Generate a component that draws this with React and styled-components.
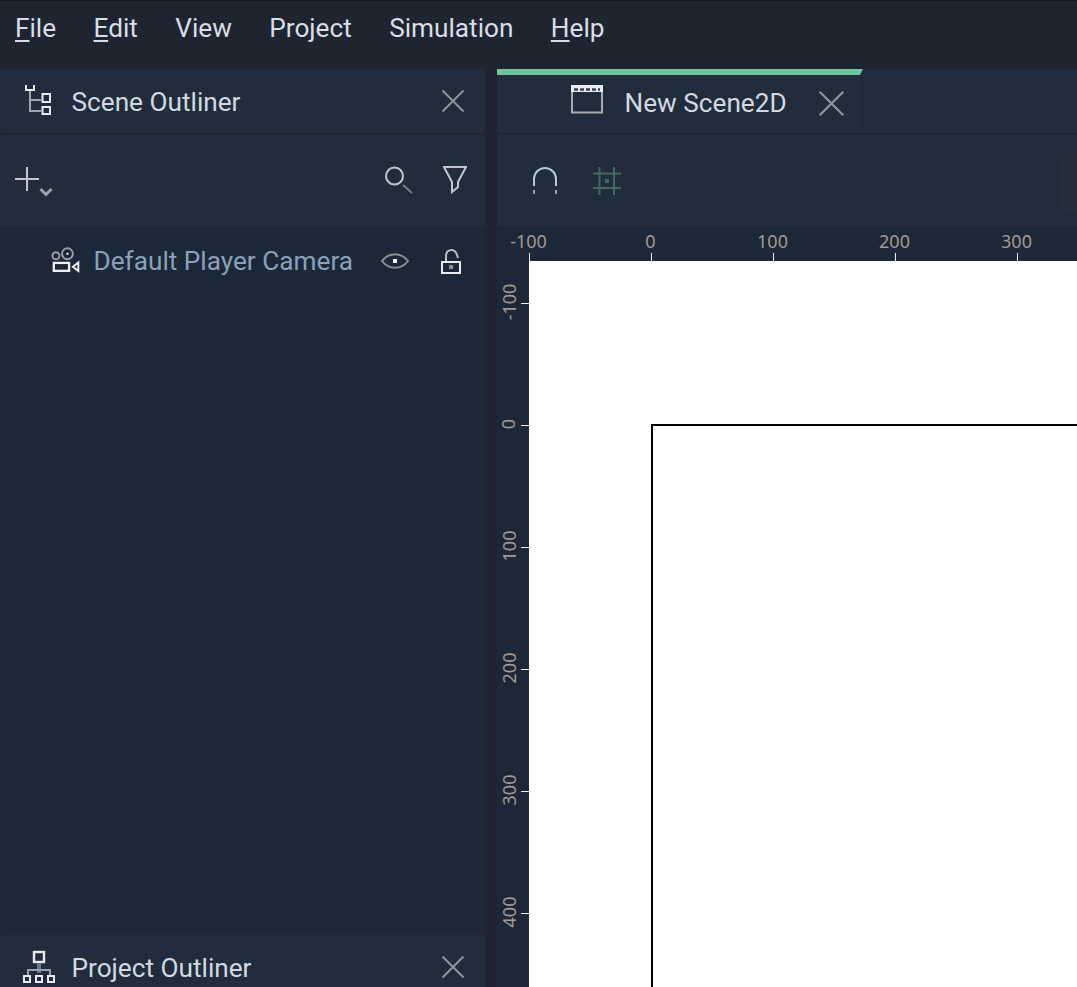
import React from "react";
import styled, { createGlobalStyle } from "styled-components";

const MENU = [
  { label: "File", key: "F" },
  { label: "Edit", key: "E" },
  { label: "View" },
  { label: "Project" },
  { label: "Simulation" },
  { label: "Help", key: "H" },
];

const RULER_VALUES = [-100, 0, 100, 200, 300, 400];
const PX_PER_UNIT = 1.22;

function TreeIcon() {
  return (
    <svg width="28" height="32" viewBox="0 0 28 32" fill="none">
      <path d="M2 0v5h8V0" stroke="#e8ebef" strokeWidth="2" />
      <path d="M6 6v20h11M6 15h11" stroke="#a0a5ab" strokeWidth="2" />
      <rect x="18.5" y="9" width="7.5" height="8" stroke="#e8ebef" strokeWidth="2" />
      <rect x="18.5" y="22" width="7.5" height="7" stroke="#e8ebef" strokeWidth="2" />
    </svg>
  );
}

function CloseIcon({ size = 24 }) {
  return (
    <svg width={size} height={size} viewBox="0 0 24 24" fill="none">
      <path d="M1.5 1.5l21 21M22.5 1.5l-21 21" stroke="#8f959b" strokeWidth="2" />
    </svg>
  );
}

function ClapIcon() {
  return (
    <svg width="32" height="36" viewBox="0 0 32 36" fill="none">
      <rect x="1" y="1" width="30" height="26.5" stroke="#a7abb0" strokeWidth="2" />
      <rect x="0" y="0" width="32" height="7" fill="#e8ebef" />
      <path d="M3 4.5h26" stroke="#39424f" strokeWidth="2.5" strokeDasharray="4 2" />
    </svg>
  );
}

function PlusIcon() {
  return (
    <svg width="40" height="32" viewBox="0 0 40 32" fill="none">
      <path d="M12 0v24M0 12h24" stroke="#c3c7cc" strokeWidth="2" />
      <path d="M25.5 22l5.5 5.5 5.5-5.5" stroke="#a0a5ab" strokeWidth="3" />
    </svg>
  );
}

function SearchIcon() {
  return (
    <svg width="28" height="28" viewBox="0 0 28 28" fill="none">
      <circle cx="9.5" cy="10" r="8.5" stroke="#c3c7cc" strokeWidth="2" />
      <path d="M18 19l9 8" stroke="#7c7f84" strokeWidth="2" />
    </svg>
  );
}

function FilterIcon() {
  return (
    <svg width="24" height="28" viewBox="0 0 24 28" fill="none">
      <path d="M1 1h22l-8 15v5l-6 5V16z" stroke="#c3c7cc" strokeWidth="2" />
    </svg>
  );
}

function MagnetIcon() {
  return (
    <svg width="26" height="30" viewBox="0 0 26 30" fill="none">
      <path d="M2 20V13a11 11 0 0 1 22 0v7" stroke="#b6c8d6" strokeWidth="2" />
      <path d="M2 24v4M24 24v4" stroke="#9aa4ae" strokeWidth="2" />
    </svg>
  );
}

function GridIcon() {
  return (
    <svg width="28" height="28" viewBox="0 0 28 28" fill="none">
      <path d="M6.5 0v28M21 0v28M0 6.5h28M0 21h28" stroke="#426a5e" strokeWidth="2" />
      <rect x="12" y="12" width="4" height="4" fill="#426a5e" />
    </svg>
  );
}

function CameraIcon() {
  return (
    <svg width="32" height="28" viewBox="0 0 32 28" fill="none">
      <circle cx="6.2" cy="8.5" r="3.7" stroke="#9b9fa5" strokeWidth="2" />
      <circle cx="18.3" cy="6.4" r="5.7" stroke="#9b9fa5" strokeWidth="2" />
      <rect x="17.3" y="5.4" width="2" height="2" fill="#fff" />
      <rect x="4" y="16" width="16" height="8.3" stroke="#eef0f2" strokeWidth="2.4" />
      <path d="M24 20l5.7-4.5v9z" stroke="#eef0f2" strokeWidth="2" />
    </svg>
  );
}

function EyeIcon() {
  return (
    <svg width="28" height="16" viewBox="0 0 28 16" fill="none">
      <path d="M1 8C8-1 20-1 27 8 20 17 8 17 1 8z" stroke="#8b9096" strokeWidth="2" />
      <rect x="12" y="6" width="4" height="4" fill="#fff" />
    </svg>
  );
}

function LockIcon() {
  return (
    <svg width="20" height="25" viewBox="0 0 20 25" fill="none">
      <rect x="1" y="13" width="18" height="11" stroke="#e8ebef" strokeWidth="2" />
      <path d="M5 12V7Q5 1 11 1 15 1 17 9" stroke="#b9bdc2" strokeWidth="2" />
      <rect x="8" y="16" width="4" height="4" fill="#8b8f94" />
    </svg>
  );
}

function HierarchyIcon() {
  return (
    <HierarchySvg width="34" height="40" viewBox="0 0 34 40" fill="none">
      <rect x="11" y="5" width="10" height="10" stroke="#e8ebef" strokeWidth="2.4" />
      <path d="M16 16v10" stroke="#6e7884" strokeWidth="4" />
      <path d="M5 28v-5h22v5" stroke="#9aa0a8" strokeWidth="2" />
      <rect x="1" y="29" width="6" height="6" stroke="#e8ebef" strokeWidth="2" />
      <rect x="13" y="29" width="6" height="6" stroke="#e8ebef" strokeWidth="2" />
      <rect x="25" y="29" width="6" height="6" stroke="#e8ebef" strokeWidth="2" />
    </HierarchySvg>
  );
}

export default function App() {
  return (
    <Page>
      <GlobalStyle />
      <MenuBar>
        {MENU.map((item) => (
          <MenuItem key={item.label}>
            {item.key ? <u>{item.key}</u> : null}
            {item.key ? item.label.slice(1) : item.label}
          </MenuItem>
        ))}
      </MenuBar>
      <Workspace>
        <LeftColumn>
          <PanelHeader>
            <HeaderIcon>
              <TreeIcon />
            </HeaderIcon>
            <PanelTitle>Scene Outliner</PanelTitle>
            <CloseIcon />
          </PanelHeader>
          <OutlinerToolbar>
            <PlusIcon />
            <ToolbarRight>
              <SearchIcon />
              <FilterIcon />
            </ToolbarRight>
          </OutlinerToolbar>
          <TreeArea>
            <TreeRow>
              <CameraIcon />
              <RowLabel>Default Player Camera</RowLabel>
              <RowActions>
                <EyeIcon />
                <LockIcon />
              </RowActions>
            </TreeRow>
          </TreeArea>
          <PanelHeader>
            <HeaderIcon>
              <HierarchyIcon />
            </HeaderIcon>
            <PanelTitle>Project Outliner</PanelTitle>
            <CloseIcon />
          </PanelHeader>
        </LeftColumn>
        <RightColumn>
          <TabBar>
            <Tab>
              <ClapIcon />
              <TabTitle>New Scene2D</TabTitle>
              <CloseIcon size={27} />
            </Tab>
          </TabBar>
          <SceneToolbar>
            <MagnetIcon />
            <GridIcon />
            <ToolbarStub />
          </SceneToolbar>
          <HorizontalRuler>
            {RULER_VALUES.slice(0, 5).map((v) => (
              <RulerMarkTop key={v} style={{ left: 153.5 + v * PX_PER_UNIT }}>
                <span>{v}</span>
              </RulerMarkTop>
            ))}
          </HorizontalRuler>
          <RulerBody>
            <VerticalRuler>
              {RULER_VALUES.map((v) => (
                <RulerMarkLeft key={v} style={{ top: 164 + v * PX_PER_UNIT }}>
                  <span>{v}</span>
                </RulerMarkLeft>
              ))}
            </VerticalRuler>
            <Canvas>
              <SceneFrame />
            </Canvas>
          </RulerBody>
        </RightColumn>
      </Workspace>
    </Page>
  );
}

const GlobalStyle = createGlobalStyle`
  html, body {
    margin: 0;
    height: 100%;
    overflow: hidden;
    background: #1f2530;
  }
  #root {
    height: 100%;
  }
`;

const HierarchySvg = styled.svg`
  margin-left: -1px;
`;

const Page = styled.div`
  height: 987px;
  display: flex;
  flex-direction: column;
  font-family: Roboto, "Liberation Sans", sans-serif;
  background: #1f2530;
`;

const MenuBar = styled.div`
  height: 69px;
  flex: none;
  box-sizing: border-box;
  padding: 0 0 14px 15px;
  display: flex;
  align-items: center;
  gap: 37.4px;
  border-top: 1px solid #171b22;
`;

const MenuItem = styled.div`
  font-size: 26.2px;
  color: #d9dee6;
  u {
    text-underline-offset: 3px;
    text-decoration-thickness: 2px;
  }
`;

const Workspace = styled.div`
  flex: 1;
  min-height: 0;
  display: flex;
  gap: 12px;
`;

const LeftColumn = styled.div`
  width: 485px;
  flex: none;
  display: flex;
  flex-direction: column;
  overflow: hidden;
`;

const PanelHeader = styled.div`
  height: 64px;
  flex: none;
  box-sizing: border-box;
  padding: 0 20px 0 24px;
  display: flex;
  align-items: center;
  background: #212c3c;
  border-radius: 4px 4px 0 0;
`;

const HeaderIcon = styled.div`
  width: 47.5px;
  flex: none;
  display: flex;
  align-items: center;
`;

const PanelTitle = styled.div`
  flex: 1;
  margin-top: 2px;
  font-size: 26.2px;
  color: #d3d9e2;
`;

const OutlinerToolbar = styled.div`
  height: 91px;
  flex: none;
  box-sizing: border-box;
  margin-top: 2px;
  padding: 4px 18px 0 15px;
  display: flex;
  align-items: center;
  justify-content: space-between;
  background: #212c3c;
  border-radius: 4px 4px 0 0;
`;

const ToolbarRight = styled.div`
  display: flex;
  align-items: center;
  gap: 30px;
  margin-top: -6px;
`;

const TreeArea = styled.div`
  height: 709px;
  flex: none;
  background: #1c2837;
`;

const TreeRow = styled.div`
  height: 70px;
  box-sizing: border-box;
  padding: 0 24px 0 50px;
  display: flex;
  align-items: center;
  gap: 13px;
`;

const RowLabel = styled.div`
  font-size: 26.2px;
  color: #8aa0bc;
  white-space: nowrap;
`;

const RowActions = styled.div`
  margin-left: 15px;
  display: flex;
  align-items: center;
  gap: 32px;
`;

const RightColumn = styled.div`
  flex: 1;
  min-width: 0;
  display: flex;
  flex-direction: column;
  background: #1c2737;
`;

const TabBar = styled.div`
  height: 64px;
  flex: none;
  display: flex;
  background: #212c3c;
`;

const Tab = styled.div`
  position: relative;
  width: 366px;
  box-sizing: border-box;
  padding: 4px 16px 0 74px;
  display: flex;
  align-items: center;
  gap: 21.5px;
  border-right: 2px solid #1e2836;
  &::before {
    content: "";
    position: absolute;
    top: 0;
    left: 0;
    right: -2px;
    height: 6px;
    background: #6ec3a1;
    clip-path: polygon(0 0, 100% 0, calc(100% - 3px) 100%, 0 100%);
  }
`;

const TabTitle = styled.div`
  flex: 1;
  font-size: 26.2px;
  color: #d3d9e2;
`;

const SceneToolbar = styled.div`
  height: 91px;
  flex: none;
  box-sizing: border-box;
  margin-top: 2px;
  padding: 0 0 0 35px;
  display: flex;
  align-items: center;
  gap: 35px;
  background: #212c3c;
`;

const ToolbarStub = styled.div`
  width: 16px;
  height: 62px;
  margin: 2px 0 0 auto;
  background: #262e3d;
  border-radius: 6px 0 0 6px;
`;

const HorizontalRuler = styled.div`
  position: relative;
  height: 35px;
  flex: none;
  overflow: hidden;
`;

const RulerMarkTop = styled.div`
  position: absolute;
  bottom: 0;
  width: 1px;
  height: 8px;
  background: #f2f2f2;
  span {
    position: absolute;
    bottom: 9px;
    left: 0;
    transform: translateX(-50%);
    font-family: "Noto Sans", Roboto, sans-serif;
    font-size: 18px;
    line-height: 22px;
    color: #a39a94;
    white-space: nowrap;
  }
`;

const RulerBody = styled.div`
  flex: 1;
  min-height: 0;
  display: flex;
`;

const VerticalRuler = styled.div`
  position: relative;
  width: 32px;
  flex: none;
`;

const RulerMarkLeft = styled.div`
  position: absolute;
  right: 0;
  width: 8px;
  height: 1px;
  background: #f2f2f2;
  span {
    position: absolute;
    right: 20.5px;
    top: -1px;
    transform: translate(50%, -50%) rotate(-90deg);
    font-family: "Noto Sans", Roboto, sans-serif;
    font-size: 18px;
    line-height: 22px;
    color: #a39a94;
    white-space: nowrap;
  }
`;

const Canvas = styled.div`
  position: relative;
  flex: 1;
  min-width: 0;
  background: #fff;
  overflow: hidden;
`;

const SceneFrame = styled.div`
  position: absolute;
  left: 122px;
  top: 163px;
  right: -4px;
  bottom: -4px;
  border: 2px solid #000;
`;
